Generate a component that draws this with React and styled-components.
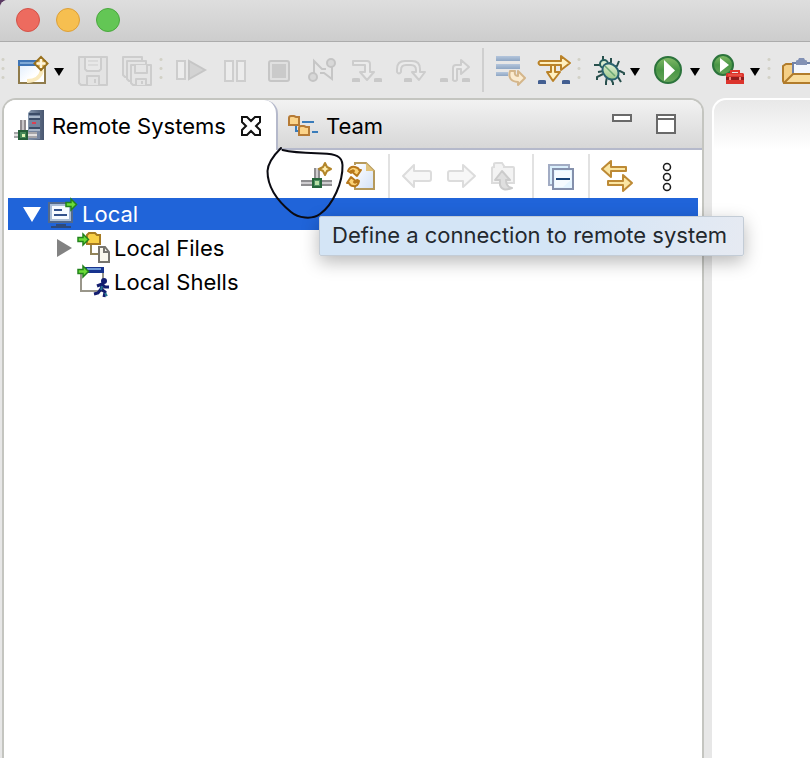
import React from "react";
import styled, { createGlobalStyle } from "styled-components";

const GlobalStyle = createGlobalStyle`
  *, *::before, *::after { box-sizing: border-box; }
  html, body, #root { height: 100%; }
  body {
    margin: 0;
    overflow: hidden;
    background: #5b3a63;
    color: #000;
    font-family: Inter, "Liberation Sans", sans-serif;
    font-size: 22px;
    line-height: 32px;
  }
  button {
    padding: 0;
    border: 0;
    background: none;
    color: inherit;
    font: inherit;
  }
`;

/* ---------- window ---------- */

const Window = styled.div`
  display: flex;
  flex-direction: column;
  min-height: 100vh;
  overflow: hidden;
  background: #e7e7e7;
  border-top-left-radius: 8px;
`;

const TitleBar = styled.header`
  display: flex;
  align-items: center;
  gap: 16px;
  height: 42px;
  padding: 0 16px 2px;
  background: linear-gradient(#dedede, #cdcdcd);
  border-bottom: 1px solid #acacac;
`;

const TrafficLight = styled.button`
  width: 24px;
  height: 24px;
  border-radius: 50%;
  background: ${(p) => p.$fill};
  border: 1px solid ${(p) => p.$edge};
`;

/* ---------- main toolbar ---------- */

const MainToolbar = styled.div`
  display: flex;
  align-items: center;
  height: 56px;
  padding-left: 1px;
  overflow: hidden;
`;

const Group = styled.div`
  display: flex;
  flex: none;
  margin-left: ${(p) => (p.$spaced ? "2px" : "0")};
`;

const ToolButton = styled.button`
  display: flex;
  flex: none;
  align-items: center;
  justify-content: center;
  width: 44px;
  height: 44px;
`;

const Split = styled.div`
  display: flex;
  flex: none;
  align-items: center;
  width: 60px;
  height: 44px;
  padding-left: 8px;
`;

const SplitMain = styled.button`
  display: flex;
  width: 32px;
  height: 32px;
`;

const SplitArrow = styled.button`
  display: flex;
  align-items: center;
  justify-content: center;
  width: 20px;
  height: 32px;
  padding-top: 4px;
`;

const Grip = styled.div`
  flex: none;
  width: 8px;
  height: 30px;
  margin-left: ${(p) => (p.$spaced ? "2px" : "0")};
  background: radial-gradient(circle, #d2d1c6 1px, transparent 2px) 0 0 / 4px 9px repeat-y;
`;

const Divider = styled.div`
  flex: none;
  width: 2px;
  height: 44px;
  margin: ${(p) => (p.$low ? "4px 5px 0" : "0 5px")};
  background: ${(p) => (p.$low ? "#e2e2e2" : "#cfcfcf")};
`;

/* ---------- workbench ---------- */

const Workbench = styled.main`
  display: grid;
  flex: 1;
  grid-template-columns: 702fr 98fr;
  gap: 8px;
  padding-left: 2px;
`;

const View = styled.section`
  display: flex;
  flex-direction: column;
  min-width: 0;
  background: #fff;
  border: 2px solid #c4c5c0;
  border-bottom: 0;
  border-radius: 14px 14px 0 0;
`;

const EditorArea = styled.section`
  background: linear-gradient(#e8e8e8, #fff 50px);
  border: 2px solid #fff;
  border-width: 2px 0 0 2px;
  border-top-left-radius: 14px;
`;

const TabBar = styled.div`
  display: flex;
  height: 50px;
  background: linear-gradient(#f2f2f2, #d6d6d6);
  border-radius: 12px 12px 0 0;
  box-shadow: inset 0 -2px #b5b9cb;
`;

const Tabs = styled.div`
  display: flex;
  flex: 1;
`;

const Tab = styled.div`
  display: flex;
  align-items: center;
  gap: 8px;
  height: 50px;
  padding: 2px 14px 0 10px;
  background: ${(p) => (p.$active ? "#fff" : "none")};
  border-right: ${(p) => (p.$active ? "2px solid #b5b9cb" : "0")};
  border-radius: ${(p) => (p.$active ? "12px 14px 0 0" : "0")};
`;

const TabLabel = styled.button`
  display: flex;
  align-items: center;
  gap: 6px;
  white-space: nowrap;
`;

const CloseButton = styled.button`
  display: flex;
  padding-left: 6px;
`;

const WindowControls = styled.div`
  display: flex;
  gap: 24px;
  padding: 14px 26px 0 0;
`;

const ControlButton = styled.button`
  display: flex;
  align-items: flex-start;
  width: 20px;
  height: 20px;
`;

const ViewToolbar = styled.div`
  display: flex;
  align-items: center;
  justify-content: flex-end;
  height: 48px;
  padding-right: 13px;
`;

const MenuSlot = styled.div`
  display: flex;
  margin-left: 6px;
`;

const TooltipAnchor = styled.div`
  position: relative;
  margin-top: 4px;
  height: 44px;
`;

const ViewToolButton = styled(ToolButton)`
  margin-top: 4px;
`;

const Tooltip = styled.div`
  position: absolute;
  z-index: 2;
  top: 62px;
  left: 24px;
  padding: 2px 16px 4px 12px;
  white-space: nowrap;
  color: #23282e;
  background: linear-gradient(100deg, #d4e5f6 60%, #e6eaf2);
  border: 1px solid #c3ccd6;
  border-radius: 2px;
  box-shadow: 0 6px 18px rgba(0, 0, 0, 0.28);
`;

const Marker = styled.svg`
  position: absolute;
  z-index: 3;
  top: -14px;
  left: -35px;
  pointer-events: none;
`;

/* ---------- tree ---------- */

const Tree = styled.ul`
  display: flex;
  flex-direction: column;
  gap: 2px;
  margin: 0;
  padding: 0 4px;
  list-style: none;
`;

const Row = styled.li`
  display: flex;
  align-items: center;
  gap: 4px;
  height: 32px;
  padding-left: ${(p) => 14 + p.$level * 32}px;
  color: ${(p) => (p.$selected ? "#fff" : "#000")};
  background: ${(p) => (p.$selected ? "#2064d9" : "none")};
`;

const Twisty = styled.button`
  display: flex;
  align-items: center;
  justify-content: center;
  width: 20px;
  height: 32px;
`;

const TwistySpace = styled.span`
  width: 20px;
`;

/* ---------- icons ---------- */

const Icon = ({ children, w = 32, h = 32 }) => (
  <svg width={w} height={h} viewBox={`0 0 ${w} ${h}`} fill="none" overflow="visible" aria-hidden="true">
    {children}
  </svg>
);

const NewIcon = () => (
  <Icon>
    <defs>
      <linearGradient id="newFill" x1="0" y1="0" x2="1" y2="1">
        <stop offset="0" stopColor="#dcebfc" />
        <stop offset=".6" stopColor="#fff" />
      </linearGradient>
    </defs>
    <path d="M2 7h26v22H2z" fill="url(#newFill)" stroke="#8f7b4b" strokeWidth="2" />
    <path d="M10 27c9 0 14-5 15-11" stroke="#faeabd" strokeWidth="4" />
    <path d="M1 6h20v6H1z" fill="#3e74b5" />
    <path d="M3 8h15v2H3z" fill="#7fa9d6" />
    <path d="M24 3 30.500 9.500 24 16 17.500 9.500z" fill="#d8ab50" stroke="#98701d" strokeWidth="2" />
    <path d="M24 5v9M19.500 9.500h9" stroke="#fff6dc" strokeWidth="2.400" />
  </Icon>
);

const SaveIcon = () => (
  <Icon>
    <g stroke="#cdcdcd" strokeWidth="2" strokeLinejoin="round" fill="#e3e3e3">
      <path d="M2 3h28v28H4l-2-2z" />
      <path d="M8 3h16v12l-2 2H10l-2-2z" fill="#e8e8e8" />
      <path d="M10 31v-9h12v9M18 25v4" />
      <path d="M11 7h10M11 11h10" strokeWidth="1" />
    </g>
  </Icon>
);

const SaveAllIcon = () => (
  <Icon>
    <g stroke="#cdcdcd" strokeWidth="2" strokeLinejoin="round" fill="#e5e5e5">
      <path d="M2 3h19v20H4l-2-2z" />
      <path d="M6 7h19v20H8l-2-2z" />
      <path d="M10 11h20v20H12l-2-2z" />
      <path d="M14 11v8h12v-8M15 31v-6h10v6M21 27v3" />
    </g>
  </Icon>
);

const ResumeIcon = () => (
  <Icon>
    <path d="M2 7h8v18H2z" stroke="#cdcdcd" strokeWidth="2" fill="#ececec" />
    <path d="M14 7v18l16-9z" stroke="#c6c6c6" strokeWidth="2" fill="#d3d3d3" />
  </Icon>
);

const PauseIcon = () => (
  <Icon>
    <path d="M6 7h8v20H6zM18 7h8v20h-8z" stroke="#cecece" strokeWidth="2" fill="#ececec" />
  </Icon>
);

const StopIcon = () => (
  <Icon>
    <rect x="6" y="7" width="20" height="20" rx="2" stroke="#c6c6c6" strokeWidth="2" fill="#e0e0e0" />
    <path d="M9 10h14v14H9z" fill="#cacaca" />
  </Icon>
);

const DisconnectIcon = () => (
  <Icon>
    <path d="M7 20V7l8 8h4M25 11v14l-8-6h-4" stroke="#c6c6c6" strokeWidth="2" />
    <circle cx="6" cy="23" r="4" fill="#d8d8d8" stroke="#c4c4c4" strokeWidth="2" />
    <circle cx="24" cy="9" r="4" fill="#d8d8d8" stroke="#c4c4c4" strokeWidth="2" />
  </Icon>
);

const StepIntoIcon = () => (
  <Icon>
    <path d="M2 7h14q3 0 3 3v8h4l-7 8-7-8h5v-7H2z" fill="#ebebeb" stroke="#cdcdcd" strokeWidth="2" strokeLinejoin="round" />
    <path d="M1 25q0-1 2-1h4q2 0 2 1v3H1zM23 25q0-1 2-1h4q2 0 2 1v3h-8z" fill="#c9c9c9" />
  </Icon>
);

const StepOverIcon = () => (
  <Icon>
    <path d="M2 18v-3q0-8 8-8h7q8 0 8 8v3h5l-6 8-7-8h4v-2q0-5-5-5h-5q-5 0-5 5v2q-2 3-4 0z" fill="#ebebeb" stroke="#cdcdcd" strokeWidth="2" strokeLinejoin="round" />
    <path d="M9 25q0-1 2-1h4q2 0 2 1v3H9z" fill="#c9c9c9" />
  </Icon>
);

const StepReturnIcon = () => (
  <Icon>
    <path d="M14 26V14q0-3 3-3h5V6l8 7-8 7v-5h-4v11q-2 2-4 0z" fill="#ebebeb" stroke="#cdcdcd" strokeWidth="2" strokeLinejoin="round" />
    <path d="M1 25q0-1 2-1h4q2 0 2 1v3H1zM23 25q0-1 2-1h4q2 0 2 1v3h-8z" fill="#c9c9c9" />
  </Icon>
);

const FilterIcon = () => (
  <Icon>
    <defs>
      <linearGradient id="lineFill" x1="0" y1="0" x2="0" y2="1">
        <stop offset="0" stopColor="#b4c6dc" />
        <stop offset="1" stopColor="#8ea6c4" />
      </linearGradient>
    </defs>
    <path d="M1 2h24v5H1z" fill="url(#lineFill)" />
    <path d="M1 10h24v5H1z" fill="url(#lineFill)" />
    <path d="M1 18h12v4H1z" fill="url(#lineFill)" />
    <path d="M15 17q-3 10 8 11v3l7-7-7-7v5q-4 0-3-5z" fill="#fbebcf" stroke="#d4b68b" strokeWidth="2" strokeLinejoin="round" />
  </Icon>
);

const SkipIcon = () => (
  <Icon>
    <g fill="#fff0bf" stroke="#ba8227" strokeWidth="2" strokeLinejoin="round">
      <path d="M12 9v9H8l6 9 7-9h-5V9z" />
      <path d="M1 7h21V2l9 7-9 7v-5H1q-3-2 0-4z" />
    </g>
    <path d="M-1 27q0-1 2-1h4q2 0 2 1v3h-8zM23 27q0-1 2-1h4q2 0 2 1v3h-8z" fill="#435f91" />
  </Icon>
);

const BugIcon = () => (
  <Icon>
    <defs>
      <linearGradient id="bugFill" x1="0" y1="0" x2="1" y2="1">
        <stop offset="0" stopColor="#f0f8e4" />
        <stop offset="1" stopColor="#8cc078" />
      </linearGradient>
    </defs>
    <path d="M10 2v5l2 3M1 11h6l3 2M18 4v4l-3 3M26 7l-2 5-5 1M31 21v-2l-4-2h-4M28 28l-3-5-4-2M20 31v-2l-2-4M13 31v-3l1-5M4 26v-3l6-3M5 18l6-1" stroke="#28504d" strokeWidth="2" />
    <circle cx="11" cy="10" r="4" fill="#d9edd0" stroke="#27605c" strokeWidth="2" />
    <ellipse cx="17.500" cy="17.500" rx="9" ry="7" transform="rotate(45 17.500 17.500)" fill="url(#bugFill)" stroke="#2a6370" strokeWidth="2" />
    <path d="M12 12 22 22" stroke="#6aa775" strokeWidth="1.500" />
  </Icon>
);

const GreenFill = ({ id }) => (
  <defs>
    <linearGradient id={id} x1="0" y1="0" x2="0" y2="1">
      <stop offset="0" stopColor="#83bb68" />
      <stop offset=".5" stopColor="#499645" />
      <stop offset="1" stopColor="#68a65b" />
    </linearGradient>
  </defs>
);

const RunIcon = () => (
  <Icon>
    <GreenFill id="runFill" />
    <circle cx="15" cy="16" r="13" fill="url(#runFill)" stroke="#2c743c" strokeWidth="2" />
    <path d="M11 6v21l11-10.500z" fill="#fff" />
  </Icon>
);

const ExternalIcon = () => (
  <Icon>
    <GreenFill id="extFill" />
    <circle cx="10" cy="11" r="10" fill="url(#extFill)" stroke="#2c743c" strokeWidth="2" />
    <path d="M7 4v14l9-7z" fill="#fff" />
    <path d="M18 20v-3h8v3" stroke="#e1362d" strokeWidth="2" />
    <path d="M14 19h16l1 1v10H13V20z" fill="#dc342c" />
    <path d="M13 23h18v3H13z" fill="#8f1c1c" />
    <path d="M15 21h14" stroke="#f2685b" strokeWidth="1" />
    <path d="M16 23h2v3h-2zM26 23h2v3h-2z" fill="#f08a80" />
  </Icon>
);

const TaskFolderIcon = () => (
  <Icon>
    <path d="M2 12 5 10h7v19H3l-1-2z" fill="#f5cf86" stroke="#b27c2b" strokeWidth="2" />
    <path d="M12 9h18v13H12z" fill="#f4f7fd" stroke="#7082a8" strokeWidth="2" />
    <path d="M15 11V7q0-1 2-1l1-2h5l1 2q2 0 2 1v4z" fill="#8291b5" />
    <path d="m3 29 9-9h22v9z" fill="#f9dc9c" stroke="#b27c2b" strokeWidth="2" strokeLinejoin="round" />
  </Icon>
);

const DropArrow = () => (
  <Icon w={10} h={8}>
    <path d="M0 0h10L5 8z" fill="#000" />
  </Icon>
);

const ServerIcon = () => (
  <Icon>
    <defs>
      <linearGradient id="serverFill" x1="0" y1="0" x2="1" y2="0">
        <stop offset="0" stopColor="#8697ae" />
        <stop offset="1" stopColor="#48566f" />
      </linearGradient>
    </defs>
    <path d="M7 10v12M11 10v12" stroke="#8f8a8f" strokeWidth="2" />
    <path d="M9 10v12" stroke="#c9c5c8" strokeWidth="2" />
    <path d="M14 3 17 0h13v30H14z" fill="url(#serverFill)" />
    <path d="M15 3h11v26H15z" fill="#75859f" />
    <path d="M15 4h11M15 9h11M15 18h11" stroke="#3c4d68" strokeWidth="2" />
    <path d="M15 7h11M15 20h11" stroke="#a9b7c9" strokeWidth="2" />
    <path d="M18 13h4" stroke="#dc4053" strokeWidth="2" />
    <path d="M0 23h23M0 27h23" stroke="#a7a6a9" strokeWidth="2" />
    <path d="M0 25h23" stroke="#e2e0e0" strokeWidth="2" />
    <path d="M5 21h8v8H5z" fill="#448857" stroke="#245f38" strokeWidth="2" />
    <path d="M8 24h3v3H8z" fill="#ddf3b5" />
  </Icon>
);

const CloseIcon = () => (
  <Icon w={22} h={22}>
    <path d="M2 2h5l4 4 4-4h5v5l-4 4 4 4v5h-5l-4-4-4 4H2v-5l4-4-4-4z" stroke="#111" strokeWidth="2" />
  </Icon>
);

const FolderShape = ({ x, y }) => (
  <path transform={`translate(${x} ${y})`} d="M1 3q0-2 2-2h3l2 1h3v8H1z" fill="#fbd48a" stroke="#b67b36" strokeWidth="2" />
);

const TeamIcon = () => (
  <Icon>
    <path d="M14 12h12M24 22h6M8 16v5h5" stroke="#3a7cba" strokeWidth="2" />
    <FolderShape x={0} y={5} />
    <FolderShape x={10} y={15} />
  </Icon>
);

const NewConnectionIcon = () => (
  <Icon>
    <path d="M14 8v12M18 8v12M0 21h31M0 25h31" stroke="#8f8e91" strokeWidth="2" />
    <path d="M16 8v12M0 23h31" stroke="#cfcdd0" strokeWidth="2" />
    <path d="M12 19h8v8h-8z" fill="#4c8f62" stroke="#26663b" strokeWidth="2" />
    <path d="M14 21h4v4h-4z" fill="#b8dfa6" />
    <path d="M24 3 26 7 30 9 26 11 24 15 22 11 18 9 22 7z" fill="#ffefb0" stroke="#b3862a" strokeWidth="2" strokeLinejoin="round" />
  </Icon>
);

const RefreshIcon = () => (
  <Icon>
    <defs>
      <linearGradient id="pageFill" x1="0" y1="0" x2="1" y2="1">
        <stop offset="0" stopColor="#fff" />
        <stop offset="1" stopColor="#d3e1f6" />
      </linearGradient>
    </defs>
    <path d="M10 3h11l8 8v18H10z" fill="url(#pageFill)" />
    <path d="M10 5V3h11l8 8v18H10v-3" stroke="#b69a5c" strokeWidth="2" />
    <path d="M21 3v8h8z" fill="#e0c27a" />
    <g fill="#fbd277" stroke="#b7781c" strokeWidth="2" strokeLinejoin="round">
      <path d="M3 11q2-5 7-4 4 1 4 3h2l-4 6-6-5h3q-2-2-3 2z" />
      <path d="M14 21q-1 6-6 5-3 0-4-3H2l4-6 6 5H9q2 2 3-2z" />
    </g>
  </Icon>
);

const BackIcon = () => (
  <Icon>
    <path d="M2 16 13 5v6h15q2 0 2 2v6q0 2-2 2H13v6z" fill="#f7f7f7" stroke="#dcdcdc" strokeWidth="2" strokeLinejoin="round" />
  </Icon>
);

const ForwardIcon = () => (
  <Icon>
    <path d="M30 16 18 5v6H5q-2 0-2 2v6q0 2 2 2h13v6z" fill="#f7f7f7" stroke="#dcdcdc" strokeWidth="2" strokeLinejoin="round" />
  </Icon>
);

const UpIcon = () => (
  <Icon>
    <path d="M3 8q0-1 2-1V4q0-1 2-1h6l2 3v1h9q1 0 1 1v15H3z" fill="#f3f3f3" stroke="#dcdcdc" strokeWidth="2" />
    <path d="m13 11 8 9h-4q0 7 6 8-10 4-12-3v-5H6z" fill="#dfdfdf" stroke="#cbcbcb" strokeWidth="2" strokeLinejoin="round" />
  </Icon>
);

const CollapseIcon = () => (
  <Icon>
    <path d="M4 5h20v20H4z" fill="#d9effc" stroke="#a2acc4" strokeWidth="2" />
    <path d="M8 9h20v20H8z" fill="#e5f5ff" stroke="#8490ac" strokeWidth="2" />
    <path d="M10 11h16v9l-8 7h-8z" fill="#fff" opacity=".6" />
    <path d="M11 19h14" stroke="#174276" strokeWidth="2" />
  </Icon>
);

const LinkIcon = () => (
  <Icon>
    <g fill="#fbe6a3" stroke="#bd8a35" strokeWidth="2" strokeLinejoin="round">
      <path d="M1 9 10 1v6h15v4H10v6z" />
      <path d="M31 23 22 15v6H7v4h15v6z" />
    </g>
  </Icon>
);

const MenuIcon = () => (
  <Icon>
    <g stroke="#1c1c1c" strokeWidth="1.500">
      <circle cx="16" cy="7" r="3.500" />
      <circle cx="16" cy="17" r="3.500" />
      <circle cx="16" cy="27" r="3.500" />
    </g>
  </Icon>
);

const GreenArrow = ({ x, y }) => (
  <path transform={`translate(${x} ${y})`} d="M0 3.500h5V0l5.500 5.500L5 11V7.500H0z" fill="#6bdc38" stroke="#23821c" strokeWidth="1.500" />
);

const LocalIcon = () => (
  <Icon>
    <path d="M3 5h23v19H3z" fill="#dbe8f6" stroke="#536a8c" strokeWidth="2" />
    <path d="M5 7h19v15H5z" fill="#f7fbff" stroke="#a9bdd6" strokeWidth="2" />
    <path d="M8 12h8M8 17h13" stroke="#33528b" strokeWidth="2" />
    <path d="M10 26h10v2H10zM5 28h20v2H5z" fill="#2d4a7c" />
    <GreenArrow x={20} y={1} />
  </Icon>
);

const FilesIcon = () => (
  <Icon>
    <path d="M13 12v10h8" stroke="#928459" strokeWidth="2" />
    <path d="M9 3 11 1h6l2 2h3v9H9z" fill="#f8cf47" stroke="#a77b22" strokeWidth="2" />
    <path d="M21 15h6l4 5v10H21z" fill="#faf8ed" stroke="#77756f" strokeWidth="2" />
    <path d="M26 15v5h5" stroke="#77756f" strokeWidth="2" />
    <GreenArrow x={0} y={2} />
  </Icon>
);

const ShellsIcon = () => (
  <Icon>
    <path d="M3 4h22v21H3z" fill="#fff" stroke="#99968a" strokeWidth="2" />
    <path d="M6 1h20v6H6z" fill="#17338e" />
    <path d="M9 3h14" stroke="#6e9ad8" strokeWidth="2" />
    <circle cx="26" cy="15" r="3" fill="#131d6f" />
    <path d="m25 17-2 6 4 3-1 5M23 23l-3 4-4 1M19 20l5-2 3 3h4" stroke="#131d6f" strokeWidth="3" />
    <path d="m24 20-1 4M27 27l2 3" stroke="#277990" strokeWidth="2" />
    <GreenArrow x={0} y={0} />
  </Icon>
);

/* ---------- composed parts ---------- */

const Tool = ({ label, icon: Glyph, disabled }) => (
  <ToolButton type="button" aria-label={label} disabled={disabled}>
    <Glyph />
  </ToolButton>
);

const ViewTool = ({ label, icon: Glyph, disabled }) => (
  <ViewToolButton type="button" aria-label={label} disabled={disabled}>
    <Glyph />
  </ViewToolButton>
);

const SplitTool = ({ label, icon: Glyph }) => (
  <Split>
    <SplitMain type="button" aria-label={label}><Glyph /></SplitMain>
    <SplitArrow type="button" aria-label={`${label} options`}><DropArrow /></SplitArrow>
  </Split>
);

const lights = [
  { label: "Close window", fill: "#ed6b5f", edge: "#d35248" },
  { label: "Minimize window", fill: "#f6bf50", edge: "#dc9f38" },
  { label: "Zoom window", fill: "#63c655", edge: "#4aa73e" },
];

const debugTools = [
  ["Resume", ResumeIcon],
  ["Suspend", PauseIcon],
  ["Terminate", StopIcon],
  ["Disconnect", DisconnectIcon],
  ["Step into", StepIntoIcon],
  ["Step over", StepOverIcon],
  ["Step return", StepReturnIcon],
];

export default function App() {
  return (
    <>
      <GlobalStyle />
      <Window>
        <TitleBar>
          {lights.map((l) => (
            <TrafficLight key={l.label} type="button" aria-label={l.label} $fill={l.fill} $edge={l.edge} />
          ))}
        </TitleBar>

        <MainToolbar role="toolbar" aria-label="Main">
          <Grip />
          <Group><SplitTool label="New" icon={NewIcon} /></Group>
          <Group $spaced>
            <Tool label="Save" icon={SaveIcon} disabled />
            <Tool label="Save all" icon={SaveAllIcon} disabled />
          </Group>
          <Grip />
          <Group $spaced>
            {debugTools.map(([label, icon]) => (
              <Tool key={label} label={label} icon={icon} disabled />
            ))}
          </Group>
          <Divider />
          <Group>
            <Tool label="Use step filters" icon={FilterIcon} />
            <Tool label="Skip all breakpoints" icon={SkipIcon} />
          </Group>
          <Grip />
          <Group>
            <SplitTool label="Debug" icon={BugIcon} />
            <SplitTool label="Run" icon={RunIcon} />
            <SplitTool label="External tools" icon={ExternalIcon} />
          </Group>
          <Grip $spaced />
          <Group><Tool label="Open task" icon={TaskFolderIcon} /></Group>
        </MainToolbar>

        <Workbench>
          <View aria-label="Remote Systems">
            <TabBar>
              <Tabs>
                <Tab $active>
                  <TabLabel type="button" aria-pressed="true"><ServerIcon />Remote Systems</TabLabel>
                  <CloseButton type="button" aria-label="Close Remote Systems"><CloseIcon /></CloseButton>
                </Tab>
                <Tab>
                  <TabLabel type="button" aria-pressed="false"><TeamIcon />Team</TabLabel>
                </Tab>
              </Tabs>
              <WindowControls>
                <ControlButton type="button" aria-label="Minimize">
                  <Icon w={20} h={8}><path d="M1 1h18v6H1z" fill="#fff" stroke="#696969" strokeWidth="2" /></Icon>
                </ControlButton>
                <ControlButton type="button" aria-label="Maximize">
                  <Icon w={20} h={20}><path d="M1 1h18v18H1zM1 5h18" fill="#fff" stroke="#696969" strokeWidth="2" /></Icon>
                </ControlButton>
              </WindowControls>
            </TabBar>

            <ViewToolbar role="toolbar" aria-label="Remote Systems">
              <TooltipAnchor>
                <ToolButton type="button" aria-label="Define a connection to remote system" aria-describedby="connection-tip">
                  <NewConnectionIcon />
                </ToolButton>
                <Tooltip role="tooltip" id="connection-tip">Define a connection to remote system</Tooltip>
                <Marker width="90" height="85" viewBox="0 0 90 85" fill="none" aria-hidden="true">
                  <path d="M21 8C14 15 8 22 7.500 31C7.500 49 20 63 31 72C38 78 52 80 60 74C73 65 83 42 82.500 25C82 16 76 14 62 13.500C48 13 35 13 22.500 10" stroke="#0b0b12" strokeWidth="2" strokeLinecap="round" />
                </Marker>
              </TooltipAnchor>
              <ViewTool label="Refresh" icon={RefreshIcon} />
              <Divider $low />
              <ViewTool label="Back" icon={BackIcon} disabled />
              <ViewTool label="Forward" icon={ForwardIcon} disabled />
              <ViewTool label="Up one level" icon={UpIcon} disabled />
              <Divider $low />
              <ViewTool label="Collapse all" icon={CollapseIcon} />
              <Divider $low />
              <ViewTool label="Link with editor" icon={LinkIcon} />
              <MenuSlot><ViewTool label="View menu" icon={MenuIcon} /></MenuSlot>
            </ViewToolbar>

            <Tree role="tree" aria-label="Connections">
              <Row role="treeitem" aria-level={1} aria-expanded="true" aria-selected="true" $level={0} $selected>
                <Twisty type="button" aria-label="Collapse Local">
                  <Icon w={18} h={15}><path d="M0 0h18L9 15z" fill="#fff" /></Icon>
                </Twisty>
                <LocalIcon />
                Local
              </Row>
              <Row role="treeitem" aria-level={2} aria-expanded="false" $level={1}>
                <Twisty type="button" aria-label="Expand Local Files">
                  <Icon w={15} h={18}><path d="M0 0v18l15-9z" fill="#828282" /></Icon>
                </Twisty>
                <FilesIcon />
                Local Files
              </Row>
              <Row role="treeitem" aria-level={2} $level={1}>
                <TwistySpace />
                <ShellsIcon />
                Local Shells
              </Row>
            </Tree>
          </View>
          <EditorArea aria-label="Editor" />
        </Workbench>
      </Window>
    </>
  );
}
